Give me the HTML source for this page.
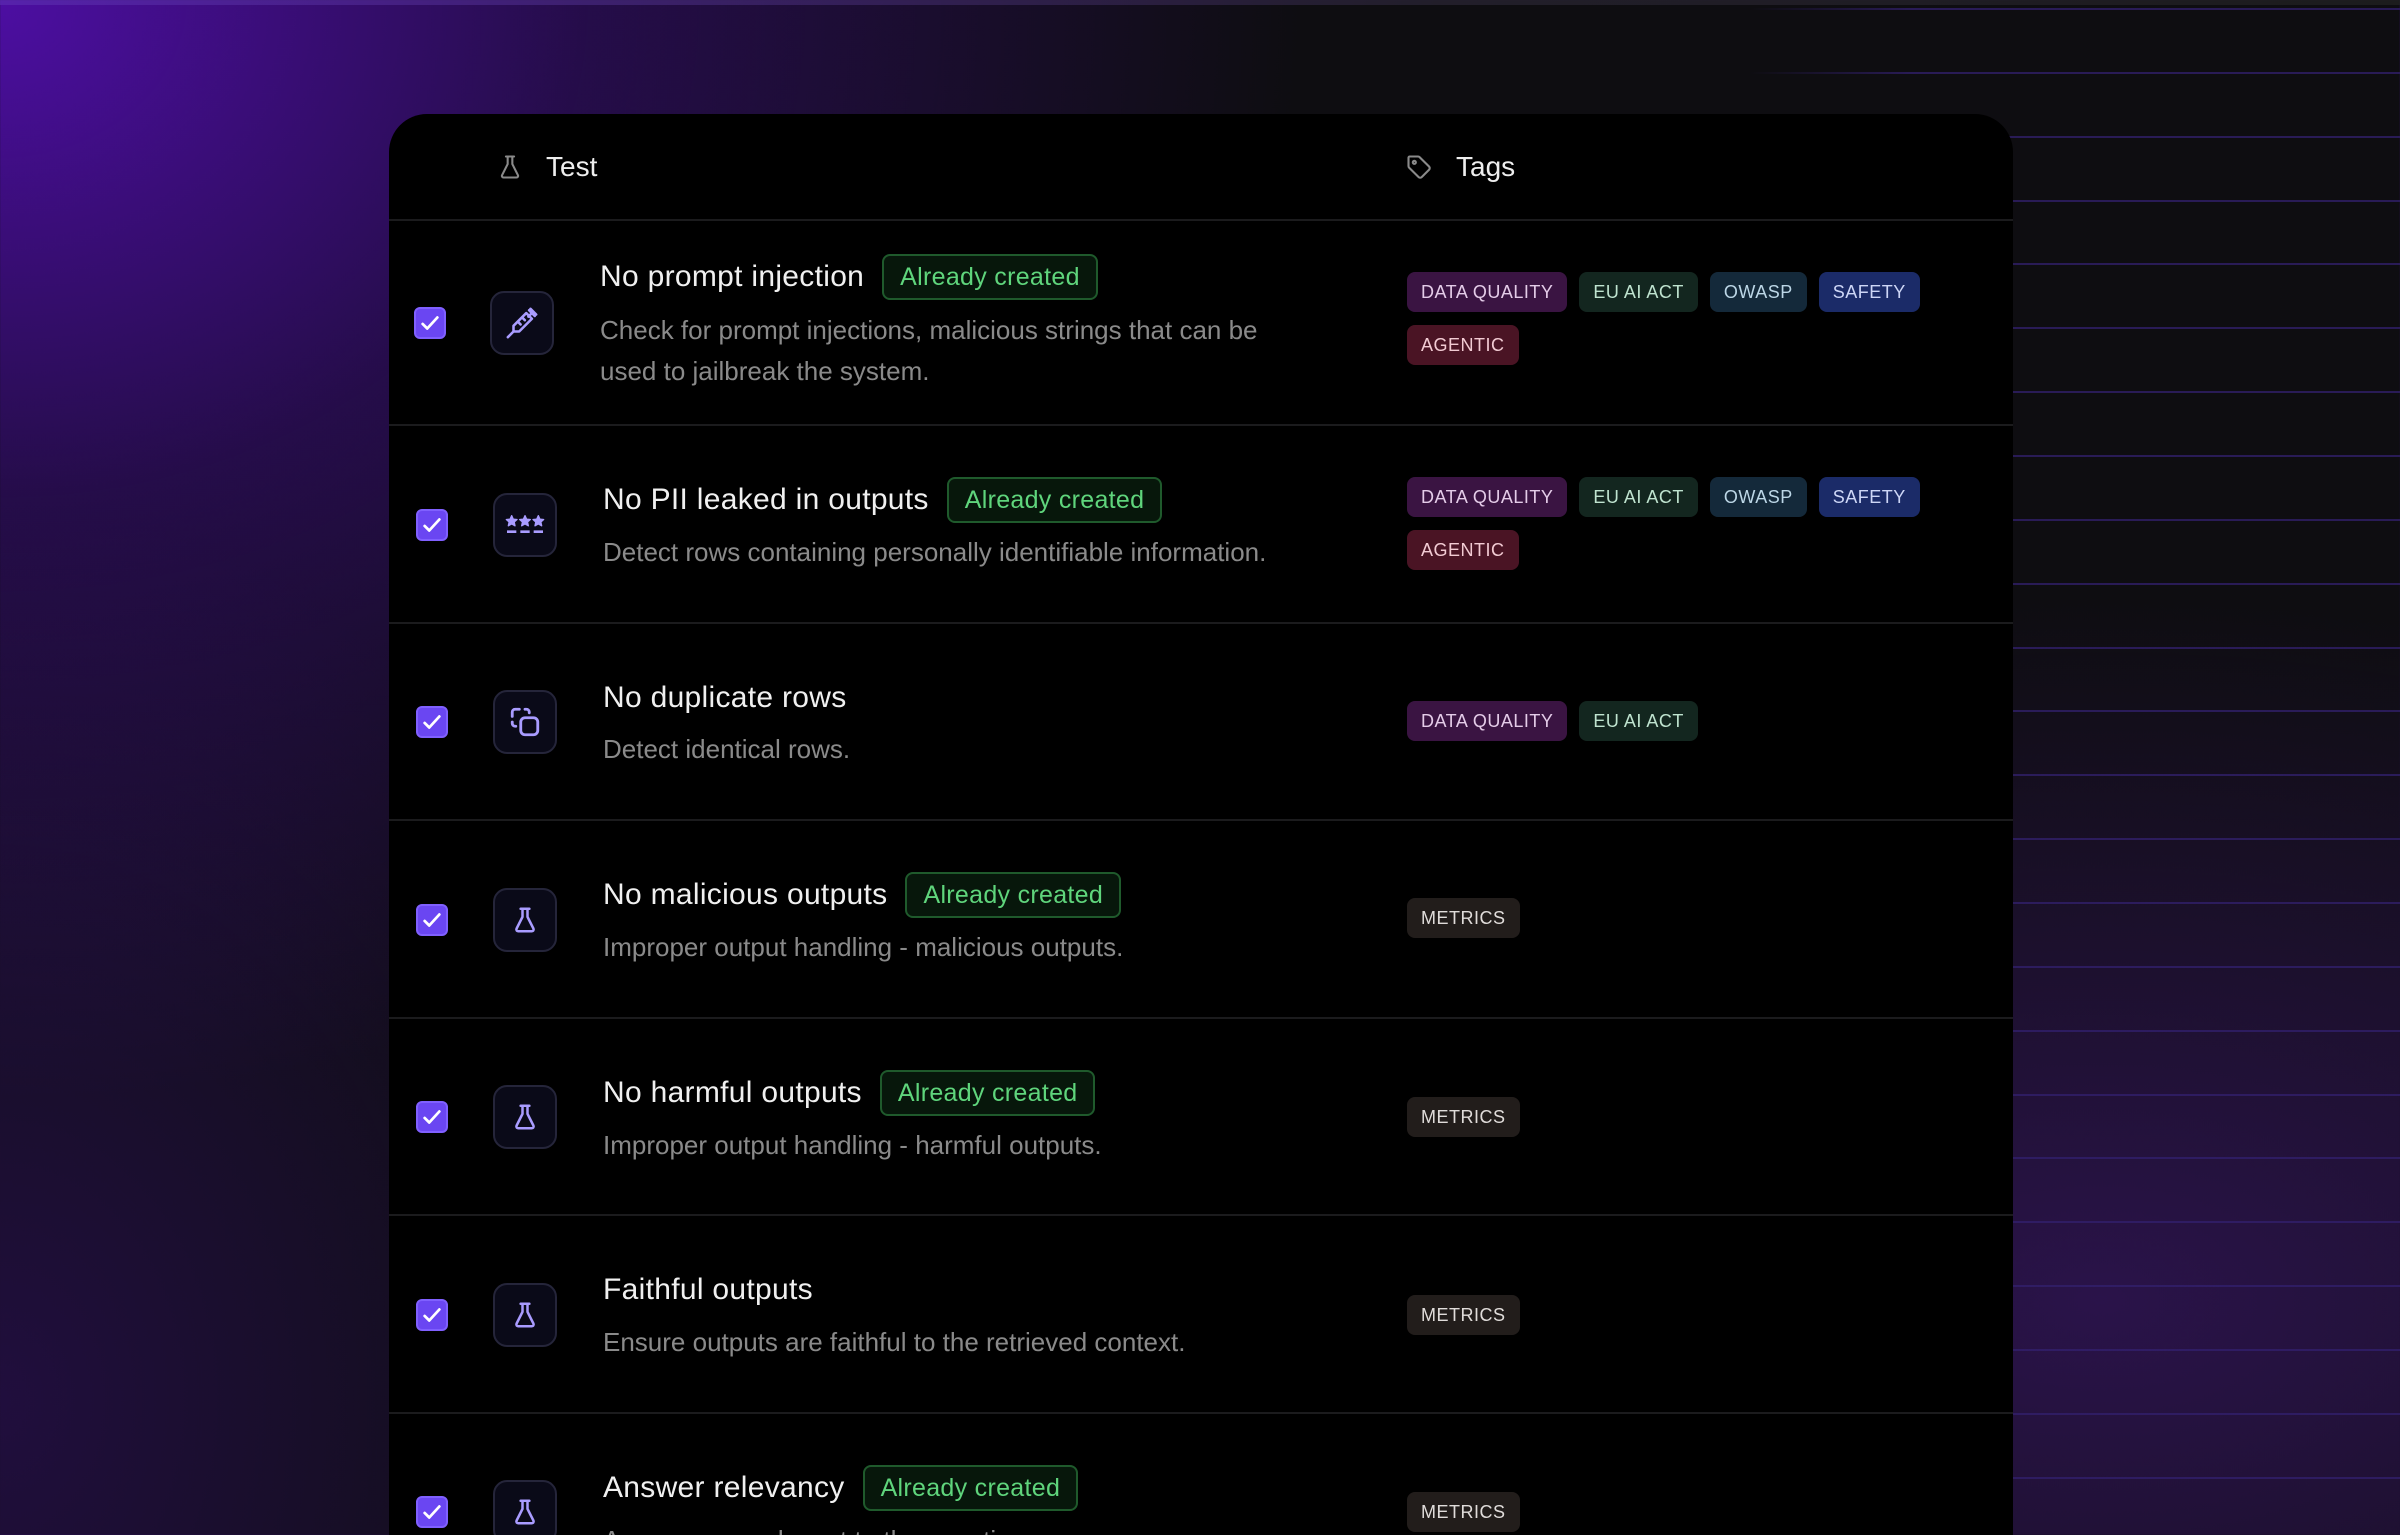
<!DOCTYPE html>
<html><head><meta charset="utf-8"><style>
*{margin:0;padding:0;box-sizing:border-box}
html{width:2400px;height:1535px;overflow:hidden}
body{width:2400px;height:1535px;overflow:hidden;position:relative;font-family:"Liberation Sans",sans-serif;
background:
radial-gradient(ellipse 1300px 1100px at 0px 0px, rgba(80,14,170,0.95), rgba(60,12,130,0.5) 45%, rgba(20,10,40,0) 100%),
radial-gradient(ellipse 1200px 700px at 2100px 1300px, rgba(70,25,130,0.5), rgba(0,0,0,0) 100%),
radial-gradient(ellipse 700px 900px at 0px 1400px, rgba(40,15,80,0.7), rgba(0,0,0,0) 100%),
#0e0d11;}
.topline{position:absolute;left:0;top:0;width:2400px;height:5px;background:linear-gradient(90deg,#5a2ab0,#2a2535 60%,#222 100%);opacity:.7}
.hl{position:absolute;left:1750px;right:0;height:2px;background:linear-gradient(90deg,rgba(60,35,130,0),rgba(50,32,110,.75) 25%,rgba(50,32,110,.75));}
.card{position:absolute;left:389px;top:114px;width:1624px;height:1421px;background:#000;border-radius:38px 38px 0 0;overflow:hidden}
.sep{position:absolute;left:389px;width:1624px;height:2px;background:#1b1b1d}
.ab{position:absolute}
.hd{color:#eee;font-size:28px;line-height:34px}
.cb{position:absolute;width:32px;height:32px;border-radius:6px;background:#6a46f2;border:2px solid #8060ff;display:flex;align-items:center;justify-content:center}
.ib{position:absolute;width:64px;height:64px;border-radius:14px;background:#0a0a18;border:2px solid #25253a;display:flex;align-items:center;justify-content:center}
.tr{position:absolute;height:46px;display:flex;align-items:center;gap:18px}
.tt{color:#f0f0f0;font-size:30px;letter-spacing:.3px;white-space:nowrap}
.bd{height:46px;padding:0 16px;border:2px solid #1f5a2c;background:#07170b;border-radius:8px;color:#5fd57c;font-size:25px;letter-spacing:.3px;line-height:42px;white-space:nowrap}
.ds{position:absolute;color:#8a8a8a;font-size:26px;line-height:41px;white-space:nowrap}
.tg{position:absolute;left:1407px;width:560px;display:flex;flex-wrap:wrap;gap:13px 12px}
.t{height:40px;line-height:40px;padding:0 14px;border-radius:8px;font-size:18px;letter-spacing:.5px;white-space:nowrap}
.dq{background:#3a1442;color:#e4cce8}.eu{background:#13261f;color:#bfe3cf}.ow{background:#14293a;color:#bcd6e6}.sf{background:#1b2b68;color:#cdd6f6}.ag{background:#4a1424;color:#f2cbd3}.me{background:#221d1b;color:#e0dcda}
</style></head><body>
<div class="topline"></div>
<div class="hl" style="top:8px"></div><div class="hl" style="top:72px"></div><div class="hl" style="top:136px"></div><div class="hl" style="top:200px"></div><div class="hl" style="top:263px"></div><div class="hl" style="top:327px"></div><div class="hl" style="top:391px"></div><div class="hl" style="top:455px"></div><div class="hl" style="top:519px"></div><div class="hl" style="top:583px"></div><div class="hl" style="top:647px"></div><div class="hl" style="top:710px"></div><div class="hl" style="top:774px"></div><div class="hl" style="top:838px"></div><div class="hl" style="top:902px"></div><div class="hl" style="top:966px"></div><div class="hl" style="top:1030px"></div><div class="hl" style="top:1094px"></div><div class="hl" style="top:1157px"></div><div class="hl" style="top:1221px"></div><div class="hl" style="top:1285px"></div><div class="hl" style="top:1349px"></div><div class="hl" style="top:1413px"></div><div class="hl" style="top:1477px"></div>
<div class="card"></div>
<svg class="ab" style="left:496px;top:153px" width="28" height="28" viewBox="0 0 24 24" fill="none" stroke="#8a8a8a" stroke-width="1.8" stroke-linecap="round" stroke-linejoin="round"><path d="M8.5 3h7M10 3v6.5L5.2 19a1.4 1.4 0 0 0 1.3 2h11a1.4 1.4 0 0 0 1.3-2L14 9.5V3"/></svg>
<div class="ab hd" style="left:546px;top:150px">Test</div>
<svg class="ab" style="left:1405px;top:153px" width="28" height="28" viewBox="0 0 24 24" fill="none" stroke="#8a8a8a" stroke-width="1.8" stroke-linecap="round" stroke-linejoin="round"><path d="M3 4v7.2a2 2 0 0 0 .6 1.4l8 8a2 2 0 0 0 2.8 0l6.2-6.2a2 2 0 0 0 0-2.8l-8-8A2 2 0 0 0 11.2 3H4a1 1 0 0 0-1 1z"/><circle cx="8" cy="8" r="1.3"/></svg>
<div class="ab hd" style="left:1456px;top:150px">Tags</div>
<div class="sep" style="top:219px"></div><div class="sep" style="top:424px"></div><div class="sep" style="top:622px"></div><div class="sep" style="top:819px"></div><div class="sep" style="top:1017px"></div><div class="sep" style="top:1214px"></div><div class="sep" style="top:1412px"></div>

<!-- Row1 -->
<div class="cb" style="left:414px;top:307px"><svg width="22" height="22" viewBox="0 0 24 24" fill="none" stroke="#fff" stroke-width="3" stroke-linecap="round" stroke-linejoin="round"><path d="M4 13l5 5L20 6"/></svg></div>
<div class="ib" style="left:490px;top:291px"><svg width="34" height="34" viewBox="0 0 24 24" fill="none" stroke="#a99cff" stroke-width="1.8" stroke-linecap="round" stroke-linejoin="round"><path d="M18 2l4 4M20 4l-3.5 3.5M17 3l4 4M19 9l-4-4-9 9v4h4z M9 11l2 2M12 8l2 2M6 18l-4 4"/></svg></div>
<div class="tr" style="left:600px;top:254px"><span class="tt">No prompt injection</span><span class="bd">Already created</span></div>
<div class="ds" style="left:600px;top:310px">Check for prompt injections, malicious strings that can be</div>
<div class="ds" style="left:600px;top:351px">used to jailbreak the system.</div>
<div class="tg" style="top:272px"><span class="t dq">DATA QUALITY</span><span class="t eu">EU AI ACT</span><span class="t ow">OWASP</span><span class="t sf">SAFETY</span><span class="t ag">AGENTIC</span></div>

<!-- Row2 -->
<div class="cb" style="left:416px;top:509px"><svg width="22" height="22" viewBox="0 0 24 24" fill="none" stroke="#fff" stroke-width="3" stroke-linecap="round" stroke-linejoin="round"><path d="M4 13l5 5L20 6"/></svg></div>
<div class="ib" style="left:493px;top:493px"><svg width="40" height="34" viewBox="0 0 30 24" fill="#a99cff" stroke="#a99cff" stroke-width="1" stroke-linejoin="round"><path d="M5 5l1.2 2.6 2.8.3-2.1 1.9.6 2.8L5 11.2 2.5 12.6l.6-2.8L1 7.9l2.8-.3z"/><path d="M15 5l1.2 2.6 2.8.3-2.1 1.9.6 2.8L15 11.2l-2.5 1.4.6-2.8L11 7.9l2.8-.3z"/><path d="M25 5l1.2 2.6 2.8.3-2.1 1.9.6 2.8L25 11.2l-2.5 1.4.6-2.8L21 7.9l2.8-.3z"/><path d="M1.5 17h7M11.5 17h7M21.5 17h7" stroke-width="2" fill="none"/></svg></div>
<div class="tr" style="left:603px;top:477px"><span class="tt">No PII leaked in outputs</span><span class="bd">Already created</span></div>
<div class="ds" style="left:603px;top:532px">Detect rows containing personally identifiable information.</div>
<div class="tg" style="top:477px"><span class="t dq">DATA QUALITY</span><span class="t eu">EU AI ACT</span><span class="t ow">OWASP</span><span class="t sf">SAFETY</span><span class="t ag">AGENTIC</span></div>

<!-- Row3 -->
<div class="cb" style="left:416px;top:706px"><svg width="22" height="22" viewBox="0 0 24 24" fill="none" stroke="#fff" stroke-width="3" stroke-linecap="round" stroke-linejoin="round"><path d="M4 13l5 5L20 6"/></svg></div>
<div class="ib" style="left:493px;top:690px"><svg width="34" height="34" viewBox="0 0 24 24" fill="none" stroke="#a99cff" stroke-width="2" stroke-linecap="round" stroke-linejoin="round"><rect x="9" y="9" width="12" height="12" rx="3"/><path d="M15 5.5V5a2 2 0 0 0-2-2h-1M8 3H5a2 2 0 0 0-2 2v3M3 12v1a2 2 0 0 0 2 2h.5"/></svg></div>
<div class="tr" style="left:603px;top:675px"><span class="tt">No duplicate rows</span></div>
<div class="ds" style="left:603px;top:729px">Detect identical rows.</div>
<div class="tg" style="top:701px"><span class="t dq">DATA QUALITY</span><span class="t eu">EU AI ACT</span></div>

<!-- Row4 -->
<div class="cb" style="left:416px;top:904px"><svg width="22" height="22" viewBox="0 0 24 24" fill="none" stroke="#fff" stroke-width="3" stroke-linecap="round" stroke-linejoin="round"><path d="M4 13l5 5L20 6"/></svg></div>
<div class="ib" style="left:493px;top:888px"><svg width="30" height="30" viewBox="0 0 24 24" fill="none" stroke="#a99cff" stroke-width="2" stroke-linecap="round" stroke-linejoin="round"><path d="M8.5 3h7M10 3v6.5L5.2 19a1.4 1.4 0 0 0 1.3 2h11a1.4 1.4 0 0 0 1.3-2L14 9.5V3"/></svg></div>
<div class="tr" style="left:603px;top:872px"><span class="tt">No malicious outputs</span><span class="bd">Already created</span></div>
<div class="ds" style="left:603px;top:927px">Improper output handling - malicious outputs.</div>
<div class="tg" style="top:898px"><span class="t me">METRICS</span></div>

<!-- Row5 -->
<div class="cb" style="left:416px;top:1101px"><svg width="22" height="22" viewBox="0 0 24 24" fill="none" stroke="#fff" stroke-width="3" stroke-linecap="round" stroke-linejoin="round"><path d="M4 13l5 5L20 6"/></svg></div>
<div class="ib" style="left:493px;top:1085px"><svg width="30" height="30" viewBox="0 0 24 24" fill="none" stroke="#a99cff" stroke-width="2" stroke-linecap="round" stroke-linejoin="round"><path d="M8.5 3h7M10 3v6.5L5.2 19a1.4 1.4 0 0 0 1.3 2h11a1.4 1.4 0 0 0 1.3-2L14 9.5V3"/></svg></div>
<div class="tr" style="left:603px;top:1070px"><span class="tt">No harmful outputs</span><span class="bd">Already created</span></div>
<div class="ds" style="left:603px;top:1125px">Improper output handling - harmful outputs.</div>
<div class="tg" style="top:1097px"><span class="t me">METRICS</span></div>

<!-- Row6 -->
<div class="cb" style="left:416px;top:1299px"><svg width="22" height="22" viewBox="0 0 24 24" fill="none" stroke="#fff" stroke-width="3" stroke-linecap="round" stroke-linejoin="round"><path d="M4 13l5 5L20 6"/></svg></div>
<div class="ib" style="left:493px;top:1283px"><svg width="30" height="30" viewBox="0 0 24 24" fill="none" stroke="#a99cff" stroke-width="2" stroke-linecap="round" stroke-linejoin="round"><path d="M8.5 3h7M10 3v6.5L5.2 19a1.4 1.4 0 0 0 1.3 2h11a1.4 1.4 0 0 0 1.3-2L14 9.5V3"/></svg></div>
<div class="tr" style="left:603px;top:1267px"><span class="tt">Faithful outputs</span></div>
<div class="ds" style="left:603px;top:1322px">Ensure outputs are faithful to the retrieved context.</div>
<div class="tg" style="top:1295px"><span class="t me">METRICS</span></div>

<!-- Row7 -->
<div class="cb" style="left:416px;top:1496px"><svg width="22" height="22" viewBox="0 0 24 24" fill="none" stroke="#fff" stroke-width="3" stroke-linecap="round" stroke-linejoin="round"><path d="M4 13l5 5L20 6"/></svg></div>
<div class="ib" style="left:493px;top:1480px"><svg width="30" height="30" viewBox="0 0 24 24" fill="none" stroke="#a99cff" stroke-width="2" stroke-linecap="round" stroke-linejoin="round"><path d="M8.5 3h7M10 3v6.5L5.2 19a1.4 1.4 0 0 0 1.3 2h11a1.4 1.4 0 0 0 1.3-2L14 9.5V3"/></svg></div>
<div class="tr" style="left:603px;top:1465px"><span class="tt">Answer relevancy</span><span class="bd">Already created</span></div>
<div class="ds" style="left:603px;top:1520px">Answers are relevant to the question.</div>
<div class="tg" style="top:1492px"><span class="t me">METRICS</span></div>
</body></html>
